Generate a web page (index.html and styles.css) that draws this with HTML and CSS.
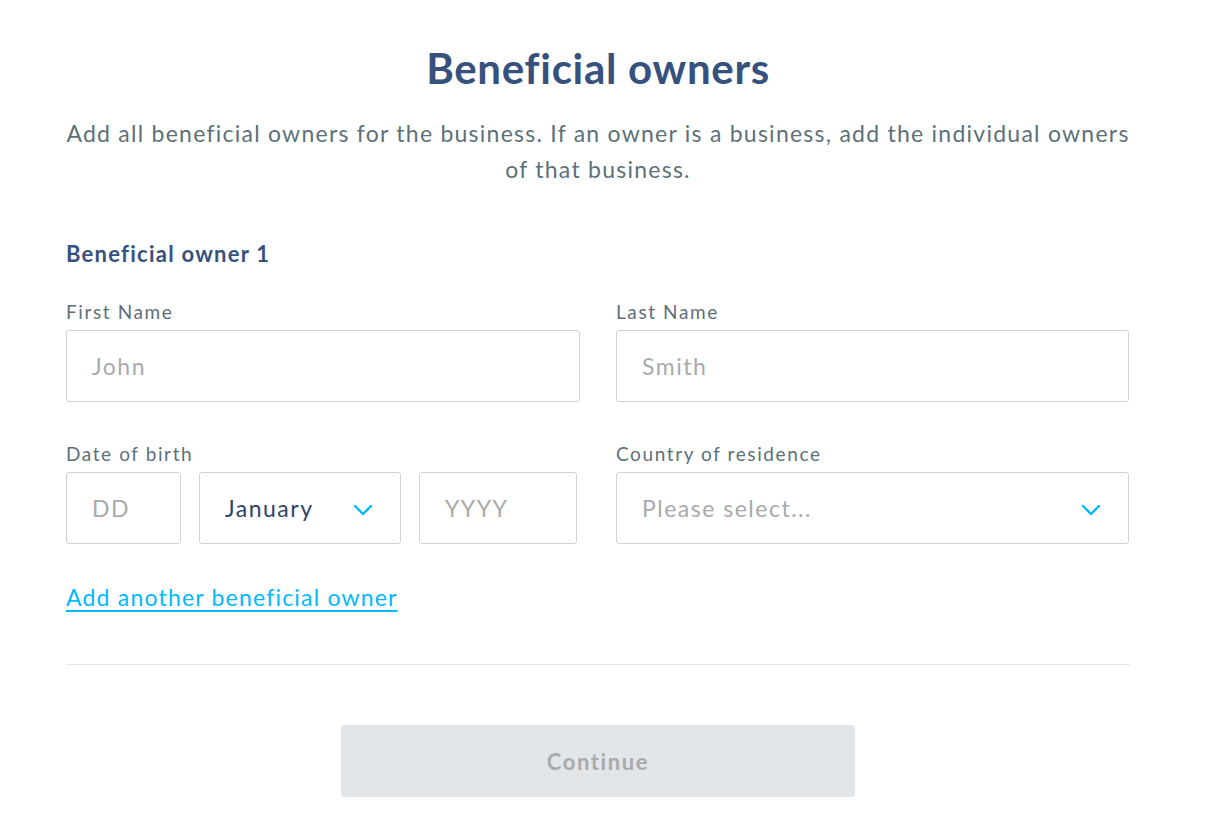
FILE: index.html
```html
<!DOCTYPE html>
<html lang="en">
<head>
<meta charset="utf-8">
<title>Beneficial owners</title>
<link rel="stylesheet" href="styles.css">
</head>
<body>
<main class="page">
  <h1 class="title">Beneficial owners</h1>
  <p class="intro">Add all beneficial owners for the business. If an owner is a business, add the individual owners of that business.</p>

  <section class="owner">
    <h2 class="owner-title">Beneficial owner 1</h2>
    <div class="grid">
      <div class="field">
        <label class="label">First Name</label>
        <div class="input"><span class="placeholder">John</span></div>
      </div>
      <div class="field">
        <label class="label">Last Name</label>
        <div class="input"><span class="placeholder">Smith</span></div>
      </div>
      <div class="field">
        <label class="label">Date of birth</label>
        <div class="dob">
          <div class="input dd"><span class="placeholder">DD</span></div>
          <div class="input select month"><span class="value">January</span>
            <svg class="chev" width="20" height="12" viewBox="0 0 20 12"><path d="M2 2 L10 10 L18 2" fill="none" stroke="#00b9ff" stroke-width="2.4" stroke-linecap="round" stroke-linejoin="round"/></svg>
          </div>
          <div class="input yyyy"><span class="placeholder">YYYY</span></div>
        </div>
      </div>
      <div class="field">
        <label class="label">Country of residence</label>
        <div class="input select"><span class="placeholder">Please select...</span>
          <svg class="chev" width="20" height="12" viewBox="0 0 20 12"><path d="M2 2 L10 10 L18 2" fill="none" stroke="#00b9ff" stroke-width="2.4" stroke-linecap="round" stroke-linejoin="round"/></svg>
        </div>
      </div>
    </div>
    <a class="add-link" href="#">Add another beneficial owner</a>
  </section>

  <hr class="divider">

  <div class="actions">
    <button class="btn" disabled>Continue</button>
  </div>
</main>
</body>
</html>
```

FILE: styles.css
```css
* { box-sizing: border-box; }
html, body { margin: 0; padding: 0; background: #fff; }
body {
  font-family: Lato, "Noto Sans", "Liberation Sans", sans-serif;
  color: #5d7079;
}
.page {
  width: 1064px;
  margin-left: 66px;
  padding-top: 42px;
}
.title {
  margin: 0;
  text-align: center;
  font-size: 42px;
  line-height: 52px;
  font-weight: 700;
  color: #37517e;
  letter-spacing: 0.7px;
}
.intro {
  margin: 21px -6px 0;
  text-align: center;
  font-size: 23px;
  line-height: 36px;
  color: #5d7079;
  letter-spacing: 1.25px;
}
.owner { margin-top: 51px; }
.owner-title {
  margin: 0;
  font-size: 22px;
  line-height: 32px;
  font-weight: 700;
  color: #37517e;
  letter-spacing: 1.25px;
}
.grid {
  margin-top: 32px;
  display: grid;
  grid-template-columns: 514px 513px;
  column-gap: 36px;
  row-gap: 42px;
}
.field { display: flex; flex-direction: column; }
.label {
  font-size: 19px;
  line-height: 20px;
  margin-bottom: 8px;
  color: #5d7079;
  letter-spacing: 1.6px;
}
.input {
  height: 72px;
  border: 1px solid #cfd3d6;
  border-radius: 3px;
  padding: 0 25px;
  display: flex;
  align-items: center;
  font-size: 23px;
  letter-spacing: 1.5px;
}
.placeholder { color: #a8aaac; }
.value { color: #2e4369; }
.select { justify-content: space-between; padding-right: 27px; }
.chev { flex: none; margin-top: 3px; }
.dob { display: flex; gap: 18px; }
.dd { width: 115px; }
.month { width: 202px; }
.yyyy { width: 158px; }
.add-link {
  display: inline-block;
  margin-top: 39px;
  font-size: 23px;
  line-height: 28px;
  color: #00b9ff;
  text-decoration: underline;
  text-underline-offset: 4px;
  letter-spacing: 1.2px;
}
.divider {
  margin: 53px 0 0;
  border: 0;
  border-top: 1px solid #e2e6e8;
}
.actions {
  display: flex;
  justify-content: center;
  margin-top: 60px;
}
.btn {
  width: 514px;
  height: 72px;
  border: 0;
  border-radius: 3px;
  background: #e2e6e8;
  color: #a8aaac;
  font-family: inherit;
  font-size: 22px;
  font-weight: 700;
  letter-spacing: 1.6px;
}
```
